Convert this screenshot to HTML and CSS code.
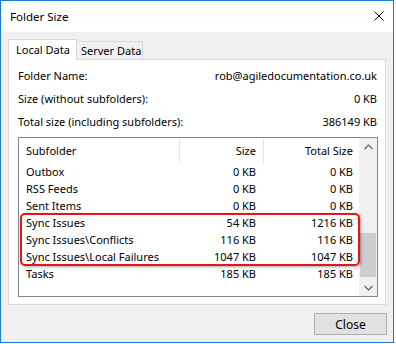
FILE: index.html
```html
<!DOCTYPE html>
<html lang="en">
<head>
  <meta charset="UTF-8" />
  <title>Folder Size</title>
  <link rel="stylesheet" href="styles.css">
</head>
<body>
  <div class="window">
    <div class="titlebar">
      <span class="title">Folder Size</span>
      <span class="close-x">
        <svg width="10" height="10" viewBox="0 0 10 10"><path d="M0.5 0.5 L9.5 9.5 M9.5 0.5 L0.5 9.5" stroke="#000" stroke-width="1" fill="none"/></svg>
      </span>
    </div>

    <div class="content">
      <div class="tabs">
        <div class="tab tab-active">Local Data</div>
        <div class="tab">Server Data</div>
      </div>

      <div class="panel">
        <div class="info-row"><span>Folder Name:</span><span>rob@agiledocumentation.co.uk</span></div>
        <div class="info-row"><span>Size (without subfolders):</span><span>0 KB</span></div>
        <div class="info-row"><span>Total size (including subfolders):</span><span>386149 KB</span></div>

        <div class="list">
          <div class="list-main">
            <div class="row list-head">
              <div class="col col-name">Subfolder</div>
              <div class="col col-size">Size</div>
              <div class="col col-total">Total Size</div>
            </div>
            <div class="row"><div class="col col-name">Outbox</div><div class="col col-size">0 KB</div><div class="col col-total">0 KB</div></div>
            <div class="row"><div class="col col-name">RSS Feeds</div><div class="col col-size">0 KB</div><div class="col col-total">0 KB</div></div>
            <div class="row"><div class="col col-name">Sent Items</div><div class="col col-size">0 KB</div><div class="col col-total">0 KB</div></div>
            <div class="row"><div class="col col-name">Sync Issues</div><div class="col col-size">54 KB</div><div class="col col-total">1216 KB</div></div>
            <div class="row"><div class="col col-name">Sync Issues\Conflicts</div><div class="col col-size">116 KB</div><div class="col col-total">116 KB</div></div>
            <div class="row"><div class="col col-name">Sync Issues\Local Failures</div><div class="col col-size">1047 KB</div><div class="col col-total">1047 KB</div></div>
            <div class="row"><div class="col col-name">Tasks</div><div class="col col-size">185 KB</div><div class="col col-total">185 KB</div></div>
            <div class="highlight"></div>
          </div>
          <div class="scrollbar">
            <div class="scroll-btn">
              <svg width="9" height="6" viewBox="0 0 9 6"><path d="M0.5 5 L4.5 1 L8.5 5" stroke="#606060" stroke-width="1.2" fill="none"/></svg>
            </div>
            <div class="scroll-track"><div class="scroll-thumb"></div></div>
            <div class="scroll-btn">
              <svg width="9" height="6" viewBox="0 0 9 6"><path d="M0.5 1 L4.5 5 L8.5 1" stroke="#606060" stroke-width="1.2" fill="none"/></svg>
            </div>
          </div>
        </div>
      </div>

      <div class="footer">
        <button class="btn">Close</button>
      </div>
    </div>
  </div>
</body>
</html>
```

FILE: styles.css
```css
body {
  margin: 0;
  background: #ffffff;
  font-family: "Segoe UI", "Noto Sans", sans-serif;
  font-size: 11px;
  color: #000000;
}

.window {
  width: 392px;
  height: 341px;
  border: 1px solid #1c7ad0;
  display: flex;
  flex-direction: column;
}

.titlebar {
  height: 31px;
  background: #ffffff;
  display: flex;
  align-items: center;
  justify-content: space-between;
  padding: 0 9px 0 9px;
}

.title {
  font-size: 11.5px;
  margin-top: -1px;
}

.close-x {
  display: flex;
  margin-top: -1px;
}

.content {
  flex: 1;
  background: #f0f0f0;
  padding: 7px 7px 0 7px;
}

.tabs {
  display: flex;
  align-items: flex-end;
  height: 20px;
  position: relative;
  z-index: 1;
}

.tab {
  height: 18px;
  border: 1px solid #d9d9d9;
  border-bottom: none;
  border-left: none;
  box-sizing: border-box;
  background: #f0f0f0;
  display: flex;
  align-items: center;
  white-space: nowrap;
  padding: 0 0 0 4px;
  width: 66px;
}

.tab-active {
  height: 21px;
  margin-bottom: -1px;
  width: 69px;
  border-left: 1px solid #d9d9d9;
  background: #ffffff;
  padding: 0 0 1px 7px;
}

.panel {
  width: 378px;
  height: 246px;
  box-sizing: border-box;
  border: 1px solid #d9d9d9;
  background: #ffffff;
  padding: 4px 8px 0 9px;
}

.info-row {
  height: 23px;
  display: flex;
  align-items: center;
  justify-content: space-between;
}

.list {
  margin-top: 4px;
  width: 360px;
  height: 160px;
  box-sizing: border-box;
  border: 1px solid #828790;
  display: flex;
}

.list-main {
  width: 340px;
  position: relative;
}

.row {
  display: flex;
  height: 17px;
  align-items: center;
}

.list-head {
  height: 25px;
}

.col {
  box-sizing: border-box;
  white-space: nowrap;
}

.col-name {
  width: 160px;
  padding-left: 7px;
}

.col-size {
  width: 84px;
  text-align: right;
  padding-right: 7px;
}

.col-total {
  width: 96px;
  text-align: right;
  padding-right: 6px;
}

.list-head .col {
  height: 24px;
  line-height: 24px;
  margin-top: 1px;
}

.list-head .col-size,
.list-head .col-total {
  border-left: 1px solid #e5e5e5;
}

.highlight {
  position: absolute;
  left: 1px;
  top: 75px;
  width: 340px;
  height: 53px;
  box-sizing: border-box;
  border: 2px solid #e5151b;
  border-radius: 5px;
  box-shadow: 1px 1px 3px rgba(0, 0, 0, 0.35);
  z-index: 2;
}

.scrollbar {
  width: 18px;
  background: #f0f0f0;
  display: flex;
  flex-direction: column;
}

.scroll-btn {
  height: 17px;
  display: flex;
  align-items: center;
  justify-content: center;
}

.scroll-track {
  flex: 1;
  padding: 78px 1px 0 1px;
}

.scroll-thumb {
  height: 44px;
  background: #cdcdcd;
}

.footer {
  display: flex;
  justify-content: flex-end;
  padding-top: 8px;
  margin-right: -1px;
}

.btn {
  width: 73px;
  height: 22px;
  background: #e1e1e1;
  border: 1px solid #adadad;
  font-family: "Segoe UI", "Noto Sans", sans-serif;
  font-size: 12px;
  color: #000000;
  padding: 0;
}
```
